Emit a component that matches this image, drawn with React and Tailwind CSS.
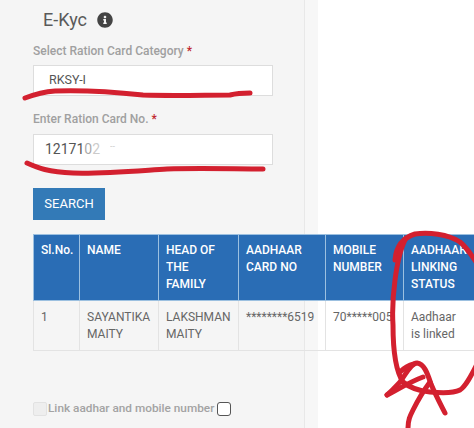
import React from 'react';
import { FaInfoCircle } from 'react-icons/fa';

const headers = [
  { label: 'Sl.No.', w: 'w-[46px]' },
  { label: 'NAME', w: 'w-[79px]' },
  { label: 'HEAD OF THE FAMILY', w: 'w-[80px]' },
  { label: 'AADHAAR CARD NO', w: 'w-[87px]' },
  { label: 'MOBILE NUMBER', w: 'w-[78px]' },
  { label: 'AADHAAR LINKING STATUS', w: 'w-[71px]' },
];

const row = ['1', 'SAYANTIKA MAITY', 'LAKSHMAN MAITY', '********6519', '70*****005', 'Aadhaar is linked'];

const App = () => {
  return (
    <div className="relative w-[474px] h-[428px] overflow-hidden font-['Roboto',sans-serif] bg-[linear-gradient(to_right,#f5f5f5_304px,#e8e8e8_304px,#e8e8e8_305px,#f7f7f7_305px,#f7f7f7_318px,#ffffff_318px)]">
      <div className="pl-[33px] pt-[9px]">
        <div className="flex items-center h-[22px] pl-[10px]">
          <h1 className="text-[18px] leading-[22px] text-[#5a5a5a]">E-Kyc</h1>
          <FaInfoCircle className="ml-[10px] text-[16px] text-[#444444]" />
        </div>

        <label className="block mt-[11px] h-[18px] text-[12px] leading-[18px] font-medium text-[#a0a0a0]">
          Select Ration Card Category <span className="text-[#c0272d]">*</span>
        </label>
        <div className="mt-[5px] w-[240px] h-[31px] pl-[15px] flex items-center bg-white border border-[#dddddd] text-[12.5px] text-[#555555]">
          RKSY-I
        </div>

        <label className="block mt-[14px] h-[18px] text-[12px] leading-[18px] font-medium text-[#a0a0a0]">
          Enter Ration Card No. <span className="text-[#c0272d]">*</span>
        </label>
        <div className="mt-[6px] w-[240px] h-[31px] pl-[11px] flex items-center bg-white border border-[#dddddd] text-[14px] text-[#555555]">
          12171<span className="opacity-50">0</span><span className="opacity-30">2</span>
          <span className="ml-[10px] -translate-y-[3px] text-[9px] opacity-30">--</span>
        </div>

        <button className="block mt-[23px] w-[72px] h-[32px] bg-[#337ab7] text-white text-[13px]">SEARCH</button>

        <table className="mt-[14px] table-fixed border-collapse w-[441px]">
          <thead>
            <tr className="h-[66px]">
              {headers.map((h) => (
                <th
                  key={h.label}
                  className={`${h.w} align-top bg-[#2a6db5] border border-[#9cc0e0] pl-[7px] pr-[14px] pt-[7px] text-left text-[12px] leading-[17px] font-medium text-white`}
                >
                  {h.label}
                </th>
              ))}
            </tr>
          </thead>
          <tbody>
            <tr className="h-[50px]">
              {row.map((cell, i) => (
                <td
                  key={i}
                  className={`align-top border border-[#e3e3e3] pl-[7px] pt-[8px] text-[12px] leading-[17px] text-[#666666] overflow-hidden ${i === 5 ? 'pr-[14px]' : 'pr-[2px]'}`}
                >
                  {cell}
                </td>
              ))}
            </tr>
          </tbody>
        </table>

        <div className="flex items-center mt-[50px] h-[16px]">
          <span className="w-[14px] h-[14px] rounded-[2px] bg-[#eeeeee] border border-[#e2e2e2]" />
          <span className="ml-px text-[11.8px] font-medium text-[#a3a3a3]">Link aadhar and mobile number</span>
          <span className="ml-[3px] w-[14px] h-[14px] rounded-[3px] bg-white border border-[#555555]" />
        </div>
      </div>

      {/* pen marks on top of the screenshot */}
      <svg className="absolute inset-0" width="474" height="428" fill="none" stroke="#d3202f" strokeWidth="5" strokeLinecap="round" strokeLinejoin="round">
        <path d="M25 98C33 95 42 92 55 91C85 90 115 92 143 95C175 96 205 95 230 95C238 93 244 93 250 93" />
        <path d="M27 163C38 168 48 172 73 173C100 174 135 171 167 169C200 168 235 169 263 169" />
        <path d="M395 260C396 248 402 238 415 234C428 232 448 234 460 242C466 247 471 254 476 262" />
        <path d="M405 240C400 250 397 265 395 280C393 295 392 310 393 325C393 345 395 370 403 382C410 388 420 391 430 392C440 393 452 394 460 390C466 386 471 376 476 366" />
        <path d="M387 395C393 390 396 386 400 382C406 374 411 363 417 363C424 364 427 372 431 384C436 396 441 405 445 413" />
        <path d="M387 395C400 388 412 381 423 377" />
        <path d="M408 428C408 420 410 416 413 410C418 400 424 390 430 382" />
        <path d="M400 372C405 367 410 365 414 364" />
      </svg>
    </div>
  );
};

export default App;
